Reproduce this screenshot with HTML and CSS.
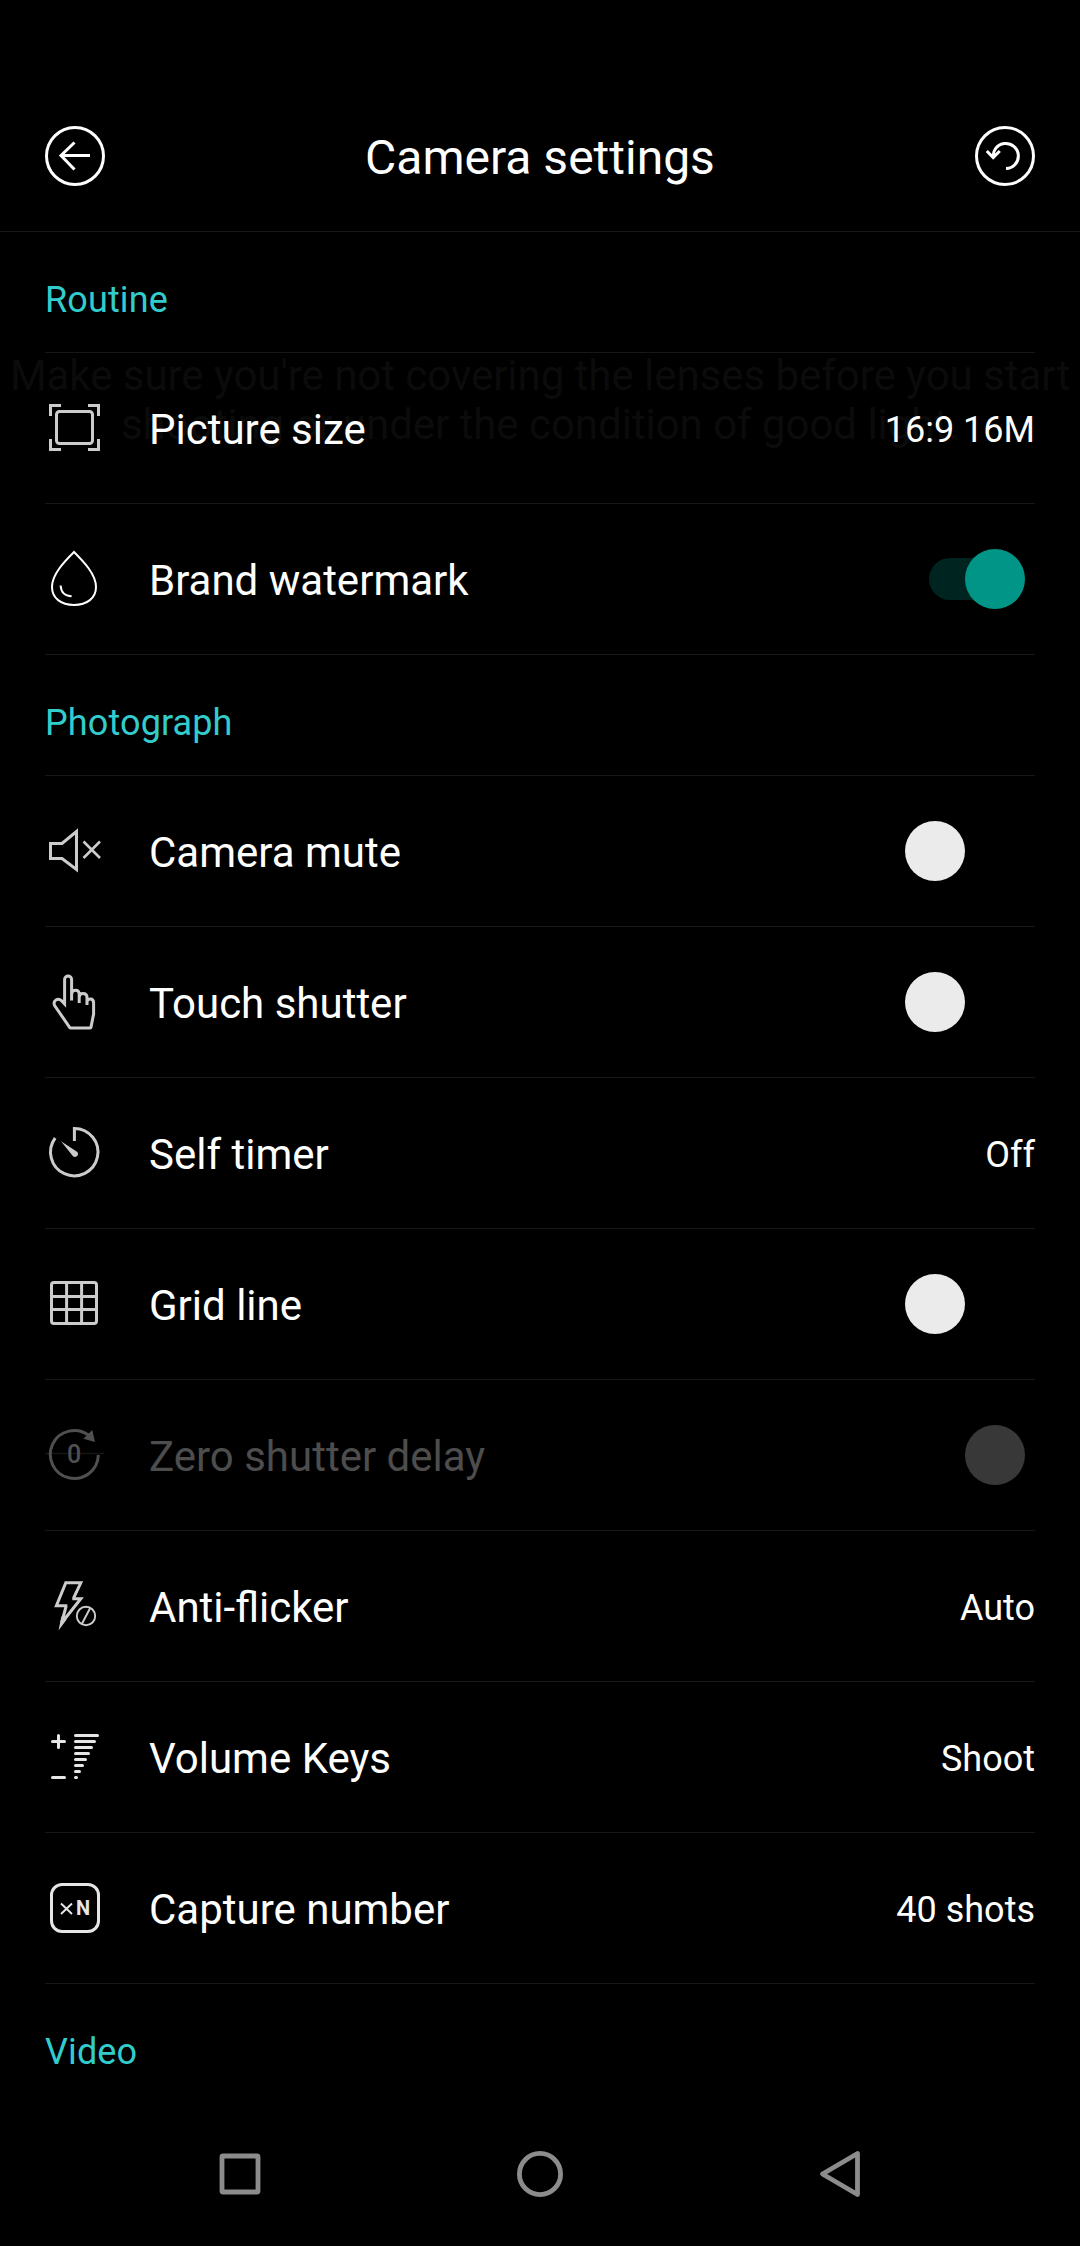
FILE: index.html
```html
<!DOCTYPE html>
<html lang="en">
    <head>
        <meta charset="UTF-8" />
        <title>Camera settings</title>
        <link rel="stylesheet" href="styles.css">
    </head>
    <body>
    <p class="hint">Make sure you're not covering the lenses before you start shooting or under the condition of good light.</p>

    <header class="top-bar">
        <svg class="icon white" viewBox="0 0 60 60">
            <circle cx="30" cy="30" r="28.5" />
            <path d="M45 29.5H16M29.5 16.5L16 29.5l13.5 14" />
        </svg>
        <h1>Camera settings</h1>
        <svg class="icon white" viewBox="0 0 60 60">
            <circle cx="30" cy="30" r="28.5" />
            <path d="M18.3 32A12.6 12.6 0 1 1 31 42.6M11.8 25l6.4 6.6 6.6-6.6" />
        </svg>
    </header>

    <main>
        <h2>Routine</h2>
        <div class="row">
            <svg class="icon" viewBox="0 0 60 60">
                <path d="M5.5 18V7.5H16M43 7.5h10.5V18M53.5 41v10.5H43M16 51.5H5.5V41" />
                <rect x="11.5" y="13.5" width="36" height="32" rx="3" />
            </svg>
            <span class="label">Picture size</span>
            <span class="value">16:9 16M</span>
        </div>
        <div class="row">
            <svg class="icon white thin" viewBox="0 0 60 60">
                <path d="M29 3C38 12 51 25 51 38C51 49 42 56 29 56S7 49 7 38C7 25 20 12 29 3Z" />
                <path d="M15.6 36.5C16 43 20 47 26.6 47.2" />
            </svg>
            <span class="label">Brand watermark</span>
            <div class="toggle on"><div class="thumb"></div></div>
        </div>

        <h2>Photograph</h2>
        <div class="row">
            <svg class="icon" viewBox="0 0 60 60">
                <path d="M5.5 22.5H17L31.5 10.5V48.5L17 37.5H5.5Z" />
                <path class="fine" d="M38.5 20.5L55 37M55 20.5L38.5 37" />
            </svg>
            <span class="label">Camera mute</span>
            <div class="toggle"><div class="thumb"></div></div>
        </div>
        <div class="row">
            <svg class="icon" viewBox="0 0 60 60">
                <path d="M26.6 28.5V7.5a3.5 3.5 0 0 0-7 0V32L16.5 28.7C13 25.5 7.5 28.5 9.6 33.5L24.6 55.3a1.5 1.5 0 0 0 1.2.6H45a1 1 0 0 0 1-.8L48.6 42V31q0-4-3.2-4q-2.6 0-3.4 2.5M26.6 22q.4-3.7 4-3.7q3.6 0 3.6 4.2V31M34.2 25q.4-3.5 3.8-3.5q4 0 4 4V33" />
            </svg>
            <span class="label">Touch shutter</span>
            <div class="toggle"><div class="thumb"></div></div>
        </div>
        <div class="row">
            <svg class="icon" viewBox="0 0 60 60">
                <path d="M29.4 18V5.4A23.7 23.7 0 1 1 10.2 15" />
                <path class="solid" d="M16 18.3L32 28.7A2.9 2.9 0 0 1 27.8 33Z" />
            </svg>
            <span class="label">Self timer</span>
            <span class="value">Off</span>
        </div>
        <div class="row">
            <svg class="icon" viewBox="0 0 60 60">
                <rect x="6.5" y="8.5" width="45" height="41" rx="2.5" />
                <path d="M21.6 8.5v41M36.6 8.5v41M6.5 22.5h45M6.5 35.5h45" />
            </svg>
            <span class="label">Grid line</span>
            <div class="toggle"><div class="thumb"></div></div>
        </div>
        <div class="row disabled">
            <svg class="icon" viewBox="0 0 60 60">
                <path class="strike" d="M0 28.5H59" />
                <path d="M53.3 30A24 24 0 1 1 44 10.5" />
                <path class="solid" d="M47.3 5L50 17L38.3 13.8Z" />
                <text class="zero" x="29" y="38">0</text>
            </svg>
            <span class="label">Zero shutter delay</span>
            <div class="toggle end"><div class="thumb"></div></div>
        </div>
        <div class="row">
            <svg class="icon" viewBox="0 0 60 60">
                <path d="M20.8 6.8H35.8L28.8 21.5V22.7H35.8L16.6 47L20.9 31V29.8H11.4Z" />
                <path class="solid" d="M13.5 54.5L16.5 40L18.5 45L22 43Z" />
                <circle class="hair" cx="41" cy="40" r="9.2" />
                <path class="hair" d="M36.8 48L45.2 32" />
            </svg>
            <span class="label">Anti-flicker</span>
            <span class="value">Auto</span>
        </div>
        <div class="row">
            <svg class="icon bright round" viewBox="0 0 60 60">
                <path d="M7.5 14.4H19.5M13.5 8.4V20.4M7.5 50.5H19.5" />
                <path d="M30.5 8.5H52.5M30.5 14.5H49.5M30.5 20.5H46.5M30.5 26.5H43.5M30.5 32.5H40.5M30.5 38.5H37.5M30.5 44.5H34.5M30.5 50.5H31.5" />
            </svg>
            <span class="label">Volume Keys</span>
            <span class="value">Shoot</span>
        </div>
        <div class="row">
            <svg class="icon bright" viewBox="0 0 60 60">
                <rect x="6.5" y="6.5" width="47" height="47" rx="10.5" />
                <path class="hair" d="M16 25.5L27 36M27 25.5L16 36" />
                <text class="letter" x="38" y="37">N</text>
            </svg>
            <span class="label">Capture number</span>
            <span class="value">40 shots</span>
        </div>

        <h2>Video</h2>
    </main>

    <nav class="nav-bar">
        <svg viewBox="0 0 60 60"><rect x="12" y="12" width="36" height="36" rx="1" /></svg>
        <svg viewBox="0 0 60 60"><circle cx="30" cy="30" r="20.6" /></svg>
        <svg viewBox="0 0 60 60"><path d="M47.5 9.5V50.5L12.5 30Z" /></svg>
    </nav>
    </body>
</html>
```
FILE: styles.css
```css
* {
    box-sizing: border-box;
}
body {
    margin: 0;
    height: 2246px;
    display: flex;
    flex-direction: column;
    position: relative;
    overflow: hidden;
    background-color: #000;
    color: #fff;
    font-family: Roboto, sans-serif;
}

/* camera hint that shines through behind the list */
.hint {
    position: absolute;
    top: 351px;
    left: 0;
    width: 1080px;
    margin: 0;
    color: #0b0b0b;
    font-size: 42px;
    line-height: 49px;
    letter-spacing: -0.04px;
    text-align: center;
}

.top-bar {
    position: relative;
    height: 232px;
    padding: 80px 45px 0;
    display: flex;
    align-items: center;
    justify-content: space-between;
    border-bottom: 1px solid #171717;
}
h1 {
    margin: 0;
    padding-top: 3px;
    font-size: 48px;
    font-weight: 400;
}

main {
    position: relative;
    flex: 1;
    padding: 0 45px;
    overflow: hidden;
}
h2 {
    height: 121px;
    margin: 0;
    padding-top: 15px;
    line-height: 106px;
    border-bottom: 1px solid #171717;
    color: #33cccc;
    font-size: 36px;
    font-weight: 400;
    letter-spacing: 0.12px;
}
h2:last-child {
    border-bottom: none;
}

.row {
    height: 151px;
    display: flex;
    align-items: center;
    border-bottom: 1px solid #171717;
}
.label {
    flex: 1;
    margin-left: 44px;
    padding-top: 2px;
    font-size: 42px;
}
.value {
    padding-top: 3px;
    font-size: 36px;
}

/* icons */
.icon {
    width: 60px;
    height: 60px;
    fill: none;
    stroke: #ccc;
    stroke-width: 3;
    color: #ccc;
}
.icon.white {
    stroke: #fff;
}
.icon.thin {
    stroke-width: 2;
}
.icon.bright {
    stroke: #e6e6e6;
    color: #e6e6e6;
}
.icon.round {
    stroke-linecap: round;
}
.icon .fine {
    stroke-width: 2.6;
}
.icon .hair {
    stroke-width: 1.9;
}
.icon .solid {
    fill: currentColor;
    stroke: none;
}
.icon text {
    fill: currentColor;
    stroke: none;
    text-anchor: middle;
    font-weight: 700;
}
.icon .zero {
    font-size: 25px;
    font-weight: 500;
}
.icon .letter {
    font-size: 20px;
}
.icon .strike {
    stroke: #161616;
    stroke-width: 1.5;
}

/* switches */
.toggle {
    position: relative;
    width: 120px;
    height: 60px;
    margin-right: 10px;
    display: flex;
}
.thumb {
    position: relative;
    width: 60px;
    height: 60px;
    border-radius: 50%;
    background-color: #ebebeb;
}
.toggle.on, .toggle.end {
    justify-content: flex-end;
}
.toggle.on::before {
    content: "";
    position: absolute;
    left: 24px;
    top: 9px;
    width: 72px;
    height: 42px;
    border-radius: 21px;
    background-color: #002521;
}
.toggle.on .thumb {
    background-color: #009587;
}

.disabled .label {
    color: #4d4d4d;
}
.disabled .icon {
    stroke: #505050;
    color: #505050;
}
.disabled .thumb {
    background-color: #383838;
}

.nav-bar {
    height: 144px;
    padding: 0 90px;
    display: flex;
    align-items: center;
    justify-content: space-around;
}
.nav-bar svg {
    width: 60px;
    height: 60px;
    fill: none;
    stroke: #8c8c8c;
    stroke-width: 4.8;
    stroke-linejoin: round;
}
```
